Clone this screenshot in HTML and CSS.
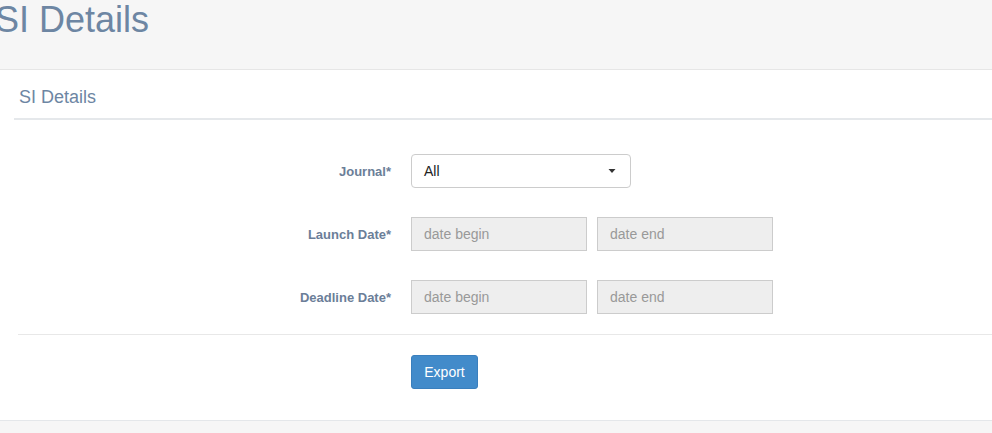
FILE: index.html
```html
<!DOCTYPE html>
<html>
<head>
<meta charset="utf-8">
<link rel="stylesheet" href="styles.css">
</head>
<body>
<div class="page-title"><h1>SI Details</h1></div>
<div class="panel">
  <div class="panel-heading">SI Details</div>
  <form class="form">
    <div class="row">
      <label class="label">Journal*</label>
      <div class="select">
        <span>All</span>
        <svg class="caret" width="8" height="4" viewBox="0 0 8 4"><path d="M0.5 0 L7.5 0 L4 4 Z" fill="#333"/></svg>
      </div>
    </div>
    <div class="row">
      <label class="label">Launch Date*</label>
      <div class="inputs">
        <input class="date" type="text" placeholder="date begin" readonly>
        <input class="date" type="text" placeholder="date end" readonly>
      </div>
    </div>
    <div class="row row-last">
      <label class="label">Deadline Date*</label>
      <div class="inputs">
        <input class="date" type="text" placeholder="date begin" readonly>
        <input class="date" type="text" placeholder="date end" readonly>
      </div>
    </div>
    <hr class="divider">
    <div class="actions">
      <button type="button" class="btn">Export</button>
    </div>
  </form>
</div>
</body>
</html>
```

FILE: styles.css
```css
html, body {
  margin: 0;
  padding: 0;
}
body {
  background: #f6f6f6;
  font-family: "Liberation Sans", Arial, sans-serif;
  overflow: hidden;
}
.page-title {
  height: 69px;
  border-bottom: 1px solid #e6e6e6;
}
.page-title h1 {
  margin: 0 0 0 -5px;
  font-size: 36px;
  font-weight: normal;
  line-height: 39.6px;
  color: #6d86a3;
}
.panel {
  background: #fff;
  border-bottom: 1px solid #e4e7ea;
  padding-bottom: 31px;
}
.panel-heading {
  margin-left: 14px;
  padding: 17px 5px 11px;
  font-size: 18px;
  line-height: 20px;
  color: #6d86a3;
  border-bottom: 2px solid #e5e8eb;
}
.form {
  padding: 34px 0 0 18px;
  margin: 0;
}
.row {
  display: flex;
  align-items: center;
  gap: 20px;
  margin-bottom: 29px;
}
.row-last {
  margin-bottom: 0;
}
.label {
  width: 373px;
  flex: none;
  text-align: right;
  font-size: 13px;
  font-weight: bold;
  color: #6b7e98;
}
.select {
  box-sizing: border-box;
  width: 220px;
  height: 34px;
  border: 1px solid #ccc;
  border-radius: 4px;
  background: #fff;
  display: flex;
  align-items: center;
  justify-content: space-between;
  padding: 0 14px 0 12px;
  font-size: 14px;
  color: #222;
}
.caret {
  display: block;
}
.inputs {
  display: flex;
  gap: 10px;
}
.date {
  box-sizing: border-box;
  width: 176px;
  height: 34px;
  margin: 0;
  border: 1px solid #ccc;
  border-radius: 0;
  background: #eee;
  padding: 0 12px;
  font-family: "Liberation Sans", Arial, sans-serif;
  font-size: 14px;
  color: #555;
  outline: none;
}
.date::placeholder {
  color: #999;
}
.divider {
  margin: 20px 0 20px;
  border: 0;
  border-top: 1px solid #e8e8e8;
  height: 0;
}
.actions {
  padding-left: 393px;
}
.btn {
  box-sizing: border-box;
  height: 34px;
  width: 67px;
  padding: 0;
  border: 1px solid #3a7fbd;
  border-radius: 3px;
  background: #428bca;
  color: #fff;
  font-family: "Liberation Sans", Arial, sans-serif;
  font-size: 14px;
  cursor: pointer;
}
```
